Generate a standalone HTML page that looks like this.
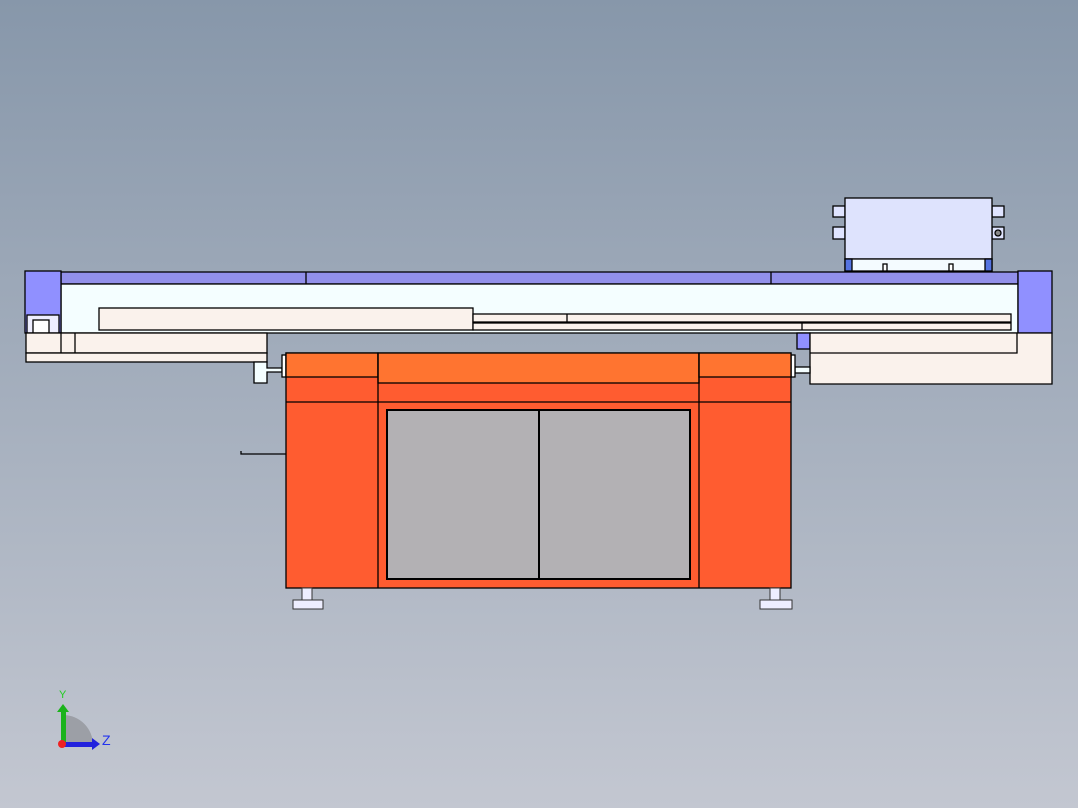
<!DOCTYPE html>
<html><head><style>
html,body{margin:0;padding:0;width:1078px;height:808px;overflow:hidden;background:linear-gradient(#8797aa,#c3c7d1);}
svg{position:absolute;left:0;top:0}
</style></head><body>
<svg width="1078" height="808" viewBox="0 0 1078 808" font-family="Liberation Sans, sans-serif">
<g stroke="#000" stroke-width="1.3">
<!-- head box -->
<rect x="833" y="206" width="12" height="11" fill="#dfe4ff"/>
<rect x="833" y="227" width="12" height="12" fill="#dfe4ff"/>
<rect x="992" y="206" width="12" height="11" fill="#dfe4ff"/>
<rect x="992" y="227" width="12" height="12" fill="#dfe4ff"/>
<circle cx="998" cy="233" r="3" fill="#888"/>
<rect x="845" y="198" width="147" height="61" fill="#dee3fd"/>
<rect x="845" y="259" width="147" height="12" fill="#f4fbff"/>
<rect x="845" y="259" width="7" height="12" fill="#5573e0"/>
<rect x="985" y="259" width="7" height="12" fill="#5573e0"/>
<rect x="883" y="264" width="4" height="7" fill="#fff"/>
<rect x="949" y="264" width="4" height="7" fill="#fff"/>
<!-- rails -->
<rect x="61" y="272" width="957" height="12" fill="#9290ea"/>
<line x1="306" y1="272" x2="306" y2="284"/>
<line x1="771" y1="272" x2="771" y2="284"/>
<rect x="61" y="284" width="957" height="49" fill="#f4feff"/>
<rect x="99" y="308" width="374" height="22" fill="#faf2ec"/>
<rect x="473" y="314" width="538" height="8" fill="#faf2ec"/>
<rect x="473" y="323" width="538" height="7" fill="#faf2ec"/>
<line x1="802" y1="323" x2="802" y2="330"/>
<line x1="567" y1="314" x2="567" y2="322"/>
<!-- left block -->
<rect x="25" y="271" width="36" height="62" fill="#9090ff"/>
<rect x="27" y="315" width="32" height="18" fill="#eef"/>
<rect x="33" y="320" width="16" height="13" fill="#fff"/>
<rect x="26" y="333" width="241" height="20" fill="#faf2ec"/>
<line x1="61" y1="333" x2="61" y2="353"/>
<line x1="75" y1="333" x2="75" y2="353"/>
<rect x="26" y="353" width="241" height="9" fill="#faf2ec"/>
<path d="M254 362h13v6h15v4h-15v11h-13z" fill="#f4feff"/>
<rect x="282" y="355" width="4" height="22" fill="#fff"/>
<!-- right block -->
<rect x="1018" y="271" width="34" height="62" fill="#9090ff"/>
<rect x="797" y="333" width="13" height="16" fill="#9090ff"/>
<path d="M810 333h242v51h-242z" fill="#faf2ec"/>
<path d="M810 353h207v-20" fill="none"/>
<rect x="795" y="367" width="15" height="6" fill="#f4feff"/>
<rect x="791" y="355" width="4" height="22" fill="#fff"/>
<!-- orange machine -->
<rect x="286" y="353" width="505" height="235" fill="#ff5c30"/>
<rect x="286" y="353" width="92" height="24" fill="#ff7430"/>
<rect x="378" y="353" width="321" height="30" fill="#ff7430"/>
<rect x="699" y="353" width="92" height="24" fill="#ff7430"/>
<line x1="378" y1="353" x2="378" y2="588"/>
<line x1="699" y1="353" x2="699" y2="588"/>
<line x1="286" y1="402" x2="791" y2="402"/>
<rect x="387" y="410" width="303" height="169" fill="#b3b1b4" stroke-width="2"/>
<line x1="539" y1="410" x2="539" y2="579" stroke-width="2"/>
<path d="M241 451v3h45" fill="none"/>
</g>
<!-- feet -->
<g fill="#eef" stroke="#333" stroke-width="1">
<rect x="302" y="588" width="10" height="12"/>
<rect x="293" y="600" width="30" height="9"/>
<rect x="770" y="588" width="10" height="12"/>
<rect x="760" y="600" width="32" height="9"/>
</g>
<!-- axis triad -->
<path d="M63 715a30 30 0 0 1 30 30h-30z" fill="#9c9fa6"/>
<rect x="61" y="710" width="5" height="35" fill="#1bb31b"/>
<path d="M57 712l6-8 6 8z" fill="#1bb31b"/>
<rect x="63" y="742" width="30" height="5" fill="#2222dd"/>
<path d="M92 738l8 6-8 6z" fill="#2222dd"/>
<circle cx="62" cy="744" r="4" fill="#e22"/>
<text x="59" y="698" font-size="11" fill="#22cc22">Y</text>
<text x="102" y="745" font-size="14" fill="#2233ee">Z</text>
</svg>
</body></html>
